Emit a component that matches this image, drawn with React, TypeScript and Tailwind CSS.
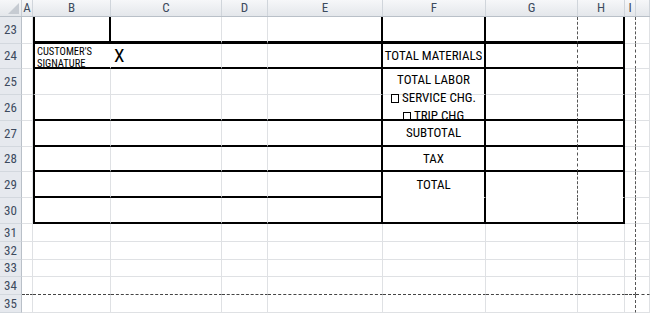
import clsx from "clsx";

const COL_W = [
  "w-[22px]",
  "w-[11px]",
  "w-[78px]",
  "w-[111px]",
  "w-[46px]",
  "w-[115px]",
  "w-[103px]",
  "w-[92px]",
  "w-[47px]",
  "w-[11px]",
  "flex-1",
];

const LETTERS = ["A", "B", "C", "D", "E", "F", "G", "H", "I", ""];

const ROWS = [
  { n: 23, h: "h-[27px]" },
  { n: 24, h: "h-[25px]" },
  { n: 25, h: "h-[26px]" },
  { n: 26, h: "h-[26px]" },
  { n: 27, h: "h-[26px]" },
  { n: 28, h: "h-[25px]" },
  { n: 29, h: "h-[26px]" },
  { n: 30, h: "h-[26px]" },
  { n: 31, h: "h-[18px]" },
  { n: 32, h: "h-[18px]" },
  { n: 33, h: "h-[17px]" },
  { n: 34, h: "h-[18px]" },
  { n: 35, h: "h-[18px]" },
];

// column index: 0 = A ... 9 = J
const B = 1, C = 2, E = 4, F = 5, G = 6, H = 7, I = 8;
const inForm = (r: number) => r >= 23 && r <= 30;

function rightBorder(r: number, c: number) {
  if (c === B && r === 23) return "border-r-2 border-r-black";
  if (c === B && r === 24) return "border-r border-r-white";
  if (inForm(r) && (c === E || c === F || c === H)) return "border-r-2 border-r-black";
  if (inForm(r) && c === G) return "border-r border-r-[#555] [border-right-style:dashed]";
  if (c === I) return "border-r border-r-[#555] [border-right-style:dashed]";
  return "border-r border-r-[#dfe1e4]";
}

function bottomBorder(r: number, c: number) {
  if (r === 34) return "border-b border-b-[#444] [border-bottom-style:dashed]";
  const form = c >= B && c <= H;
  if (form && r === 29) return c <= E ? "border-b-2 border-b-black" : "border-b border-b-white";
  if (form && r === 23) return "border-b-[3px] border-b-black";
  if (form && inForm(r) && r !== 25) return "border-b-2 border-b-black";
  return "border-b border-b-[#dfe1e4]";
}

function Box() {
  return <span className="inline-block w-[8px] h-[9px] border border-black mr-[3px] align-[-1px]" />;
}

function CellContent({ r, c }: { r: number; c: number }) {
  if (r === 24 && c === B)
    return (
      <div className="pl-[2px] pt-[2px] text-[10.5px] leading-[12px] text-black whitespace-nowrap">
        CUSTOMER'S
        <br />
        SIGNATURE
      </div>
    );
  if (r === 24 && c === C)
    return <div className="pl-[3px] h-full flex items-center text-[19px] leading-none text-black">X</div>;
  if (c === F) {
    const label = { 24: "TOTAL MATERIALS", 27: "SUBTOTAL", 28: "TAX", 29: "TOTAL" }[r as 24];
    if (label)
      return <div className="h-full flex items-center justify-center text-[13px] whitespace-nowrap text-black">{label}</div>;
    if (r === 25)
      // wrapped text runs on through row 26 and is cut at its bottom border
      return (
        <div className="relative z-10 h-[50px] overflow-hidden pt-[2px] text-[13px] leading-[18px] text-center whitespace-nowrap text-black">
          <div>TOTAL LABOR</div>
          <div>
            <Box />SERVICE CHG.
          </div>
          <div>
            <Box />TRIP CHG
          </div>
        </div>
      );
  }
  return null;
}

export default function App() {
  return (
    <div className="w-[650px] h-[315px] overflow-hidden bg-white font-['Roboto_Condensed','Roboto',sans-serif]">
      {/* column headers */}
      <div className="flex h-[17px] bg-gradient-to-b from-[#f6f7f9] to-[#e4e7eb] border-b border-b-[#b9c0c8] text-[13px] leading-[16px] text-[#3d4b5e]">
        <div className={clsx(COL_W[0], "flex-none relative border-r border-r-[#c9ced5]")}>
          <svg className="absolute right-[2px] bottom-[2px]" width="11" height="11" viewBox="0 0 11 11">
            <path d="M11 0 L11 11 L0 11 Z" fill="#c6cbd2" />
          </svg>
        </div>
        {LETTERS.map((l, i) => (
          <div
            key={i}
            className={clsx(COL_W[i + 1], i < 9 && "flex-none", "flex justify-center items-center border-r border-r-[#d0d5db]")}
          >
            {l}
          </div>
        ))}
      </div>

      {ROWS.map(({ n, h }) => (
        <div key={n} className={clsx("flex", h)}>
          <div
            className={clsx(
              COL_W[0],
              "flex-none flex items-center justify-center bg-[#e6e9ee] border-r border-r-[#b9c0c8] border-b border-b-[#d3d8de] text-[13px] text-[#3d4b5e]"
            )}
          >
            {n}
          </div>
          {LETTERS.map((_, c) => (
            <div
              key={c}
              className={clsx(
                COL_W[c + 1],
                c < 9 && "flex-none",
                "box-border",
                c === B && inForm(n) && "border-l-2 border-l-black",
                rightBorder(n, c),
                bottomBorder(n, c)
              )}
            >
              <CellContent r={n} c={c} />
            </div>
          ))}
        </div>
      ))}
    </div>
  );
}
